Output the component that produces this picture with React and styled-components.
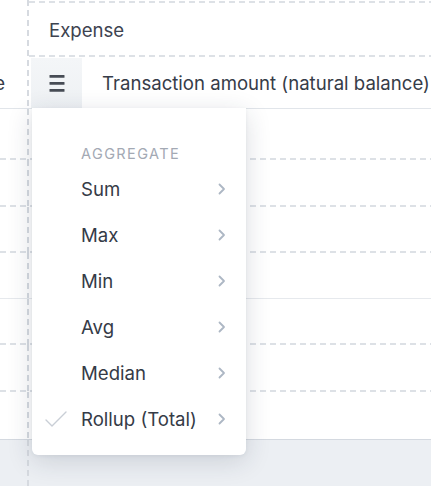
import React from "react";
import styled, { createGlobalStyle, css } from "styled-components";

const GlobalStyle = createGlobalStyle`
  html, body { margin: 0; padding: 0; background: #ffffff; }
  body { font-family: Inter, "Noto Sans", "Liberation Sans", sans-serif; overflow: hidden; }
  * { box-sizing: border-box; }
`;

const DASH = "#dde1e6";
const hDash = (pos) =>
  `repeating-linear-gradient(to right, ${DASH} 0 6px, transparent 6px 10px) ${pos} / 100% 2px no-repeat`;
const vDash = `repeating-linear-gradient(to bottom, #d6dae0 0 6px, transparent 6px 10px) right top / 2px 100% no-repeat`;

const Page = styled.div`
  position: relative;
  width: 431px;
  height: 500px;
  overflow: hidden;
  color: #353b47;
`;

const Header = styled.div`
  display: grid;
  grid-template-columns: 29px 1fr;
  grid-template-rows: 57px 51px;
  border-bottom: 1px solid #e1e5ea;
`;

const Gutter = styled.div`
  background: ${vDash};
  overflow: hidden;
  display: flex;
  align-items: center;
  justify-content: flex-end;
  ${(p) => p.$span && css`grid-row: 1 / span 2; align-items: flex-end; padding-bottom: 14px;`}
`;

const Clipped = styled.span`
  font-size: 18.6px;
  white-space: nowrap;
  margin-right: 24px;
  color: #363c48;
`;

const GroupCell = styled.div`
  display: flex;
  align-items: center;
  padding: 2px 0 0 20px;
  font-size: 18.6px;
  color: #3d4350;
  background: ${hDash("left 1px")}, ${hDash("left bottom")};
`;

const ColumnCell = styled.div`
  display: flex;
  align-items: stretch;
  min-width: 0;
`;

const MenuToggle = styled.div`
  flex: none;
  width: 51px;
  margin: 1px 0 0 2px;
  background: linear-gradient(to bottom, #f4f6f8, #eef1f4);
  display: flex;
  align-items: center;
  justify-content: center;
  color: #4b5059;
`;

const ColumnTitle = styled.div`
  display: flex;
  align-items: center;
  padding-left: 20px;
  font-size: 18.6px;
  white-space: nowrap;
  color: #363c48;
`;

const Row = styled.div`
  display: grid;
  grid-template-columns: 29px 1fr;
  height: ${(p) => p.$h}px;
  ${(p) =>
    p.$line === "dash" &&
    css`
      background: ${hDash("left bottom")};
    `}
  ${(p) =>
    p.$line === "solid" &&
    css`
      border-bottom: 1px solid #e6e9ed;
    `}
`;

const Footer = styled.div`
  display: grid;
  grid-template-columns: 29px 1fr;
  height: 47px;
  background: #eceff3;
  border-top: 1px solid #d4d9e0;
`;

const Menu = styled.div`
  position: absolute;
  left: 32px;
  top: 108px;
  width: 214px;
  height: 347px;
  background: #ffffff;
  border-radius: 0 0 6px 6px;
  box-shadow: 0 6px 26px rgba(30, 45, 70, 0.16), 0 1px 4px rgba(30, 45, 70, 0.06);
  padding: 36px 20px 13px 13px;
`;

const MenuLabel = styled.div`
  height: 20px;
  line-height: 20px;
  margin: 0 0 2px 36px;
  font-size: 14.5px;
  letter-spacing: 1.4px;
  text-transform: uppercase;
  color: #a3a9b4;
`;

const Item = styled.div`
  height: 46px;
  display: grid;
  grid-template-columns: 22px 1fr auto;
  column-gap: 14px;
  align-items: center;
  font-size: 18.6px;
  color: #353b47;
`;

const IconSlot = styled.span`
  display: flex;
  align-items: center;
  justify-content: center;
`;

const Hamburger = () => (
  <svg width="16" height="17" viewBox="0 0 16 17">
    <g fill="#474c55">
      <rect x="0.5" y="0" width="15" height="2.8" rx="0.6" />
      <rect x="0.5" y="7" width="15" height="2.8" rx="0.6" />
      <rect x="0.5" y="14" width="15" height="2.8" rx="0.6" />
    </g>
  </svg>
);

const Check = () => (
  <svg width="22" height="17" viewBox="0 0 22 17">
    <path d="M1 9 L7 15 L21 1" fill="none" stroke="#c9ced6" strokeWidth="1.4" strokeLinecap="round" strokeLinejoin="round" />
  </svg>
);

const Chevron = () => (
  <svg width="8" height="12" viewBox="0 0 8 12">
    <path d="M1.5 1.5 L6 6 L1.5 10.5" fill="none" stroke="#adb7c4" strokeWidth="1.8" strokeLinecap="round" strokeLinejoin="round" />
  </svg>
);

const rows = [
  { h: 51, line: "dash" },
  { h: 47, line: "dash" },
  { h: 46, line: "dash" },
  { h: 46, line: "solid" },
  { h: 46, line: "dash" },
  { h: 47, line: "dash" },
  { h: 47, line: "none" },
];

const items = [
  { label: "Sum" },
  { label: "Max" },
  { label: "Min" },
  { label: "Avg" },
  { label: "Median" },
  { label: "Rollup (Total)", checked: true },
];

export default function App() {
  return (
    <Page>
      <GlobalStyle />
      <Header>
        <Gutter $span>
          <Clipped>Type</Clipped>
        </Gutter>
        <GroupCell>Expense</GroupCell>
        <ColumnCell>
          <MenuToggle>
            <Hamburger />
          </MenuToggle>
          <ColumnTitle>Transaction amount (natural balance)</ColumnTitle>
        </ColumnCell>
      </Header>
      {rows.map((r, i) => (
        <Row key={i} $h={r.h} $line={r.line}>
          <Gutter />
          <div />
        </Row>
      ))}
      <Footer>
        <Gutter />
        <div />
      </Footer>
      <Menu>
        <MenuLabel>Aggregate</MenuLabel>
        {items.map((it) => (
          <Item key={it.label}>
            <IconSlot>{it.checked ? <Check /> : null}</IconSlot>
            <span>{it.label}</span>
            <IconSlot>
              <Chevron />
            </IconSlot>
          </Item>
        ))}
      </Menu>
    </Page>
  );
}
